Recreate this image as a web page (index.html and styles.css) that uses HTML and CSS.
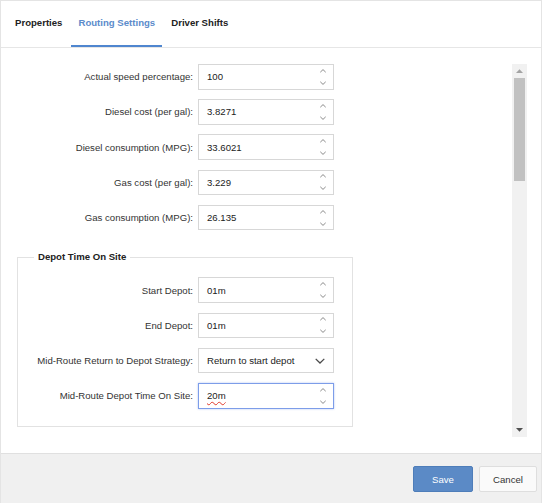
FILE: index.html
```html
<!DOCTYPE html>
<html>
<head>
<meta charset="utf-8">
<link rel="stylesheet" href="styles.css">
</head>
<body>
<div class="dialog">
  <div class="tabs">
    <div class="tab">Properties</div>
    <div class="tab active">Routing Settings</div>
    <div class="tab">Driver Shifts</div>
  </div>
  <div class="panel">
    <div class="scroll">
      <div class="row">
        <label class="lbl">Actual speed percentage:</label>
        <div class="field"><span class="val">100</span><svg class="spin" width="8" height="18" viewBox="0 0 8 18"><path d="M1.3 4.2 L4 1.6 L6.7 4.2 M1.3 13.8 L4 16.4 L6.7 13.8"/></svg></div>
      </div>
      <div class="row">
        <label class="lbl">Diesel cost (per gal):</label>
        <div class="field"><span class="val">3.8271</span><svg class="spin" width="8" height="18" viewBox="0 0 8 18"><path d="M1.3 4.2 L4 1.6 L6.7 4.2 M1.3 13.8 L4 16.4 L6.7 13.8"/></svg></div>
      </div>
      <div class="row">
        <label class="lbl">Diesel consumption (MPG):</label>
        <div class="field"><span class="val">33.6021</span><svg class="spin" width="8" height="18" viewBox="0 0 8 18"><path d="M1.3 4.2 L4 1.6 L6.7 4.2 M1.3 13.8 L4 16.4 L6.7 13.8"/></svg></div>
      </div>
      <div class="row">
        <label class="lbl">Gas cost (per gal):</label>
        <div class="field"><span class="val">3.229</span><svg class="spin" width="8" height="18" viewBox="0 0 8 18"><path d="M1.3 4.2 L4 1.6 L6.7 4.2 M1.3 13.8 L4 16.4 L6.7 13.8"/></svg></div>
      </div>
      <div class="row">
        <label class="lbl">Gas consumption (MPG):</label>
        <div class="field"><span class="val">26.135</span><svg class="spin" width="8" height="18" viewBox="0 0 8 18"><path d="M1.3 4.2 L4 1.6 L6.7 4.2 M1.3 13.8 L4 16.4 L6.7 13.8"/></svg></div>
      </div>

      <fieldset class="group">
        <legend>Depot Time On Site</legend>
        <div class="row">
          <label class="lbl">Start Depot:</label>
          <div class="field"><span class="val">01m</span><svg class="spin" width="8" height="18" viewBox="0 0 8 18"><path d="M1.3 4.2 L4 1.6 L6.7 4.2 M1.3 13.8 L4 16.4 L6.7 13.8"/></svg></div>
        </div>
        <div class="row">
          <label class="lbl">End Depot:</label>
          <div class="field"><span class="val">01m</span><svg class="spin" width="8" height="18" viewBox="0 0 8 18"><path d="M1.3 4.2 L4 1.6 L6.7 4.2 M1.3 13.8 L4 16.4 L6.7 13.8"/></svg></div>
        </div>
        <div class="row">
          <label class="lbl">Mid-Route Return to Depot Strategy:</label>
          <div class="field select"><span class="val">Return to start depot</span><svg class="chev" width="10" height="6" viewBox="0 0 10 6"><path d="M0.7 0.9 L5 5 L9.3 0.9"/></svg></div>
        </div>
        <div class="row last">
          <label class="lbl">Mid-Route Depot Time On Site:</label>
          <div class="field focus"><span class="val typo">20m</span><svg class="spin" width="8" height="18" viewBox="0 0 8 18"><path d="M1.3 4.2 L4 1.6 L6.7 4.2 M1.3 13.8 L4 16.4 L6.7 13.8"/></svg></div>
        </div>
      </fieldset>
    </div>
    <div class="sbar">
      <div class="sbtn"><svg width="7" height="4" viewBox="0 0 7 4"><polygon class="arrow-off" points="0,4 3.5,0.3 7,4"/></svg></div>
      <div class="strack"><div class="sthumb"></div></div>
      <div class="sbtn"><svg width="7" height="4" viewBox="0 0 7 4"><polygon class="arrow-on" points="0,0 7,0 3.5,3.7"/></svg></div>
    </div>
  </div>
  <div class="footer">
    <button class="btn primary">Save</button>
    <button class="btn">Cancel</button>
  </div>
</div>
</body>
</html>
```

FILE: styles.css
```css
html, body {
  margin: 0;
  padding: 0;
  background: #ffffff;
}
body {
  font-family: "Liberation Sans", Arial, sans-serif;
  font-size: 9.6px;
  color: #333333;
}
.dialog {
  box-sizing: border-box;
  width: 542px;
  height: 503px;
  border: 1px solid #e4e4e4;
  border-bottom: none;
  display: flex;
  flex-direction: column;
  background: #ffffff;
}
.tabs {
  display: flex;
  gap: 2px;
  padding-left: 7px;
  height: 46px;
  border-bottom: 1px solid #e6e6e6;
  flex: none;
}
.tab {
  box-sizing: border-box;
  height: 46px;
  line-height: 44px;
  padding: 0 7px;
  font-weight: bold;
  color: #222222;
  border-bottom: 2px solid transparent;
}
.tab.active {
  color: #5b8bcb;
  border-bottom-color: #4f86cf;
}
.panel {
  flex: none;
  height: 405px;
  box-sizing: border-box;
  padding: 16px 14px 16px 15px;
  display: flex;
}
.scroll {
  flex: 1;
  min-width: 0;
  height: 373px;
  overflow: hidden;
}
.sbar {
  flex: none;
  width: 15px;
  height: 373px;
  background: #f1f1f1;
  display: flex;
  flex-direction: column;
}
.sbtn {
  flex: none;
  height: 14px;
  display: flex;
  align-items: center;
  justify-content: center;
}
.sbtn svg {
  display: block;
}
.arrow-off {
  fill: #a3a3a3;
}
.arrow-on {
  fill: #505050;
}
.strack {
  flex: 1;
  padding: 0 2px;
}
.sthumb {
  margin-top: 0;
  height: 103px;
  background: #c1c1c1;
}
.row {
  display: grid;
  grid-template-columns: 177px 136px;
  column-gap: 5px;
  align-items: center;
  height: 25.6px;
  margin-bottom: 9.6px;
}
.lbl {
  text-align: right;
  white-space: nowrap;
  color: #333333;
}
.field {
  box-sizing: border-box;
  height: 25.6px;
  border: 1px solid #d7d7d7;
  background: #ffffff;
  display: flex;
  align-items: center;
  padding-left: 8px;
  color: #222222;
}
.val {
  flex: 1;
  white-space: nowrap;
}
.typo {
  text-decoration: underline wavy #e0392b;
  text-decoration-thickness: 1px;
  text-underline-offset: 2px;
  flex: none;
  margin-right: auto;
}
.spin {
  flex: none;
  margin-right: 6px;
  fill: none;
  stroke: #8a8a8a;
  stroke-width: 1;
}
.chev {
  flex: none;
  margin-right: 8px;
  fill: none;
  stroke: #4a4a4a;
  stroke-width: 1.3;
}
.field.focus {
  border-color: #7d9de9;
  box-shadow: 0 0 2px rgba(90, 130, 230, 0.45);
}
.group {
  box-sizing: border-box;
  width: 336px;
  margin: 21px 0 0 1px;
  padding: 14px 18px 17px 16px;
  border: 1px solid #e2e2e2;
  min-width: 0;
}
.group legend {
  padding: 0 4px;
  font-weight: bold;
  color: #222222;
  line-height: 12px;
}
.group .row {
  grid-template-columns: 159px 136px;
}
.group .row.last {
  margin-bottom: 0;
}
.footer {
  flex: 1;
  border-top: 1px solid #e0e0e0;
  background: #f0f0f0;
  display: flex;
  justify-content: flex-end;
  align-items: flex-start;
  gap: 6px;
  padding: 12px 4px 0 0;
}
.btn {
  box-sizing: border-box;
  height: 26px;
  font-family: "Liberation Sans", Arial, sans-serif;
  font-size: 9.6px;
  border-radius: 2px;
  border: 1px solid #dedede;
  background: #fafafa;
  color: #333333;
  width: 58px;
  padding: 0;
}
.btn.primary {
  width: 60px;
  background: #5b8ac6;
  border-color: #4e7db9;
  color: #ffffff;
}
```
